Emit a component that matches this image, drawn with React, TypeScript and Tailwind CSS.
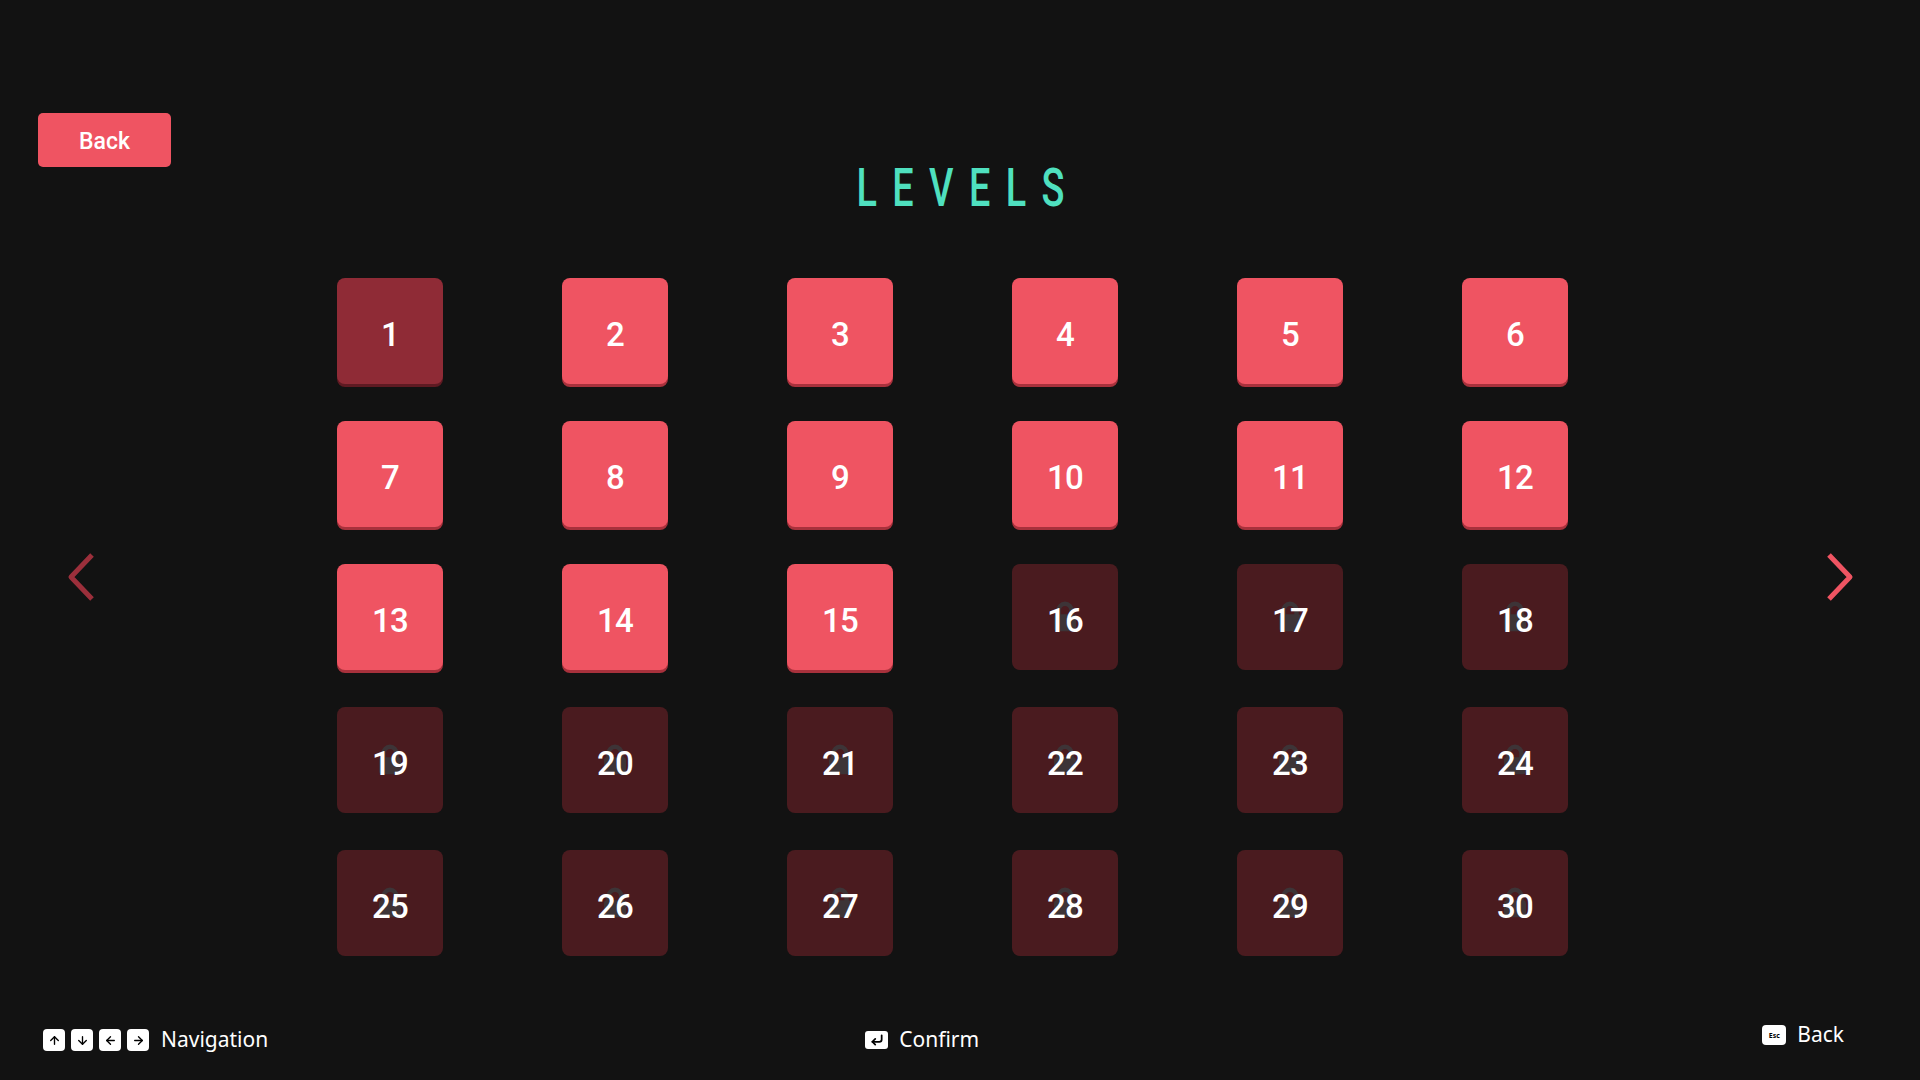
import React from 'react';
import { ArrowUp, ArrowDown, ArrowLeft, ArrowRight, CornerDownLeft } from 'lucide-react';

type TileState = 'selected' | 'open' | 'locked';

const tileStyles: Record<TileState, string> = {
  selected: 'bg-[#8f2b36] shadow-[0_3px_0_#5e1a22]',
  open: 'bg-[#ef5462] shadow-[0_3px_0_#a8313c]',
  locked: 'bg-[#4a1b1f]',
};

// Levels 1-15 unlocked, level 1 focused
const levels = Array.from({ length: 30 }, (_, i) => {
  const n = i + 1;
  const state: TileState = n === 1 ? 'selected' : n <= 15 ? 'open' : 'locked';
  return { n, state };
});

const LockMark: React.FC = () => (
  <svg width="26" height="32" viewBox="0 0 26 32" className="absolute left-1/2 top-1/2 -translate-x-1/2 -translate-y-[52%]">
    <path d="M6.5 15 V10 a6.5 6.5 0 0 1 13 0 V15" fill="none" stroke="#3d3437" strokeWidth="4.5" />
    <rect x="2" y="14" width="22" height="17" rx="3" fill="#3d3437" />
  </svg>
);

const Tile: React.FC<{ n: number; state: TileState }> = ({ n, state }) => (
  <button
    className={`relative w-[106px] h-[106px] rounded-[8px] flex items-center justify-center ${tileStyles[state]}`}
  >
    {state === 'locked' && <LockMark />}
    <span className="relative pt-[6px] text-white text-[33px] font-medium tracking-tight leading-none">{n}</span>
  </button>
);

const Key: React.FC<{ children: React.ReactNode }> = ({ children }) => (
  <span className="w-[22px] h-[22px] rounded-[4px] bg-white flex items-center justify-center text-black">
    {children}
  </span>
);

const App: React.FC = () => {
  return (
    <div className="w-[1920px] h-[1080px] bg-[#121212] overflow-hidden flex flex-col font-['Roboto',sans-serif]">
      {/* Header */}
      <div className="pt-[113px] pl-[38px]">
        <button className="w-[133px] h-[54px] rounded-[5px] bg-[#ef5462] text-white text-[23px] font-medium pt-[5px]">
          Back
        </button>
      </div>
      <div className="-mt-[6px] flex justify-center">
        <h1 className="inline-block text-[#4fe0bf] text-[54px] font-medium leading-none tracking-[22px] pl-[22px] scale-x-[0.7]">
          LEVELS
        </h1>
      </div>

      {/* Level grid with page arrows */}
      <div className="flex items-start mt-[63px] pl-[67px]">
        <svg width="28" height="48" viewBox="0 0 28 48" className="mt-[275px]">
          <path d="M25 2 L4 24 L25 46" fill="none" stroke="#9c2f3b" strokeWidth="5" strokeLinejoin="round" />
        </svg>
        <div className="ml-[242px] grid grid-cols-[repeat(6,106px)] gap-x-[119px] gap-y-[37px]">
          {levels.map((l) => (
            <Tile key={l.n} n={l.n} state={l.state} />
          ))}
        </div>
        <svg width="28" height="48" viewBox="0 0 28 48" className="mt-[275px] ml-[258px]">
          <path d="M3 2 L24 24 L3 46" fill="none" stroke="#ef5462" strokeWidth="5" strokeLinejoin="round" />
        </svg>
      </div>

      {/* Controls hint bar */}
      <div className="mt-auto mb-[20px] h-[40px] flex items-center pl-[43px] pr-[76px] text-white font-['Noto_Sans',sans-serif] text-[21px]">
        <div className="flex items-center gap-[6px]">
          <Key><ArrowUp size={13} strokeWidth={2.5} /></Key>
          <Key><ArrowDown size={13} strokeWidth={2.5} /></Key>
          <Key><ArrowLeft size={13} strokeWidth={2.5} /></Key>
          <Key><ArrowRight size={13} strokeWidth={2.5} /></Key>
          <span className="ml-[6px]">Navigation</span>
        </div>
        <div className="ml-[597px] flex items-center gap-[11px]">
          <span className="w-[23px] h-[18px] rounded-[3px] bg-white flex items-center justify-center text-black">
            <CornerDownLeft size={14} strokeWidth={3} />
          </span>
          <span>Confirm</span>
        </div>
        <div className="ml-auto -mt-[10px] flex items-center gap-[11px]">
          <span className="w-[24px] h-[20px] rounded-[4px] bg-white flex items-center justify-center text-black text-[7px] font-bold leading-none">
            Esc
          </span>
          <span>Back</span>
        </div>
      </div>
    </div>
  );
};

export default App;
